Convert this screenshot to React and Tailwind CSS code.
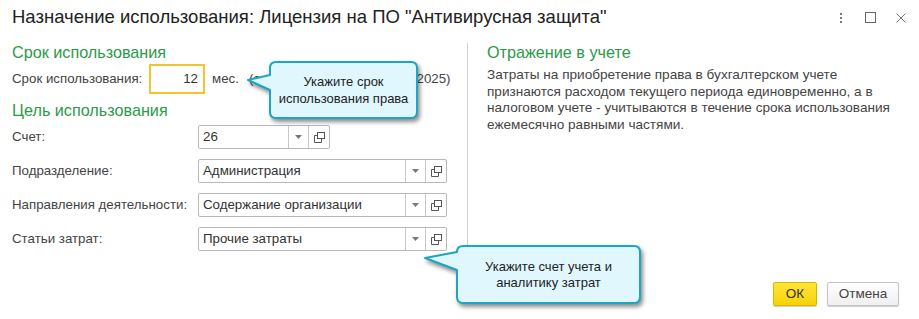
const OpenIcon = () => (
    <svg width="11" height="11" viewBox="0 0 11 11" fill="none" stroke="#555" strokeWidth="1">
        <rect x="3.5" y="0.5" width="7" height="6" />
        <path d="M3.5 3.5H0.5V10.5H7.5V6.5" />
    </svg>
);

const Arrow = () => (
    <svg width="7" height="4" viewBox="0 0 7 4">
        <path d="M0 0H7L3.5 4Z" fill="#777" />
    </svg>
);

const Combo = ({ value, width }) => (
    <div className={`flex h-[24px] border border-[#b8b8b8] rounded-[2px] bg-white ${width}`}>
        <div className="flex-1 flex items-center pl-[4px] text-[13.3px] text-[#333]">{value}</div>
        <div className="w-[20px] border-l border-[#c8c8c8] flex items-center justify-center">
            <Arrow />
        </div>
        <div className="w-[21px] border-l border-[#c8c8c8] flex items-center justify-center">
            <OpenIcon />
        </div>
    </div>
);

const Field = ({ label, value, width }) => (
    <div className="flex items-center h-[24px]">
        <div className="w-[186px] text-[13.3px] text-[#444]">{label}</div>
        <Combo value={value} width={width} />
    </div>
);

export default function App() {
    return (
        <div className="relative w-[919px] h-[319px] bg-white flex flex-col text-[#333] overflow-hidden" style={{ fontFamily: '"Liberation Sans", Arial, sans-serif' }}>
            {/* Header */}
            <div className="h-[35px] flex items-center pl-[12px] pr-[13px]">
                <div className="flex-1 text-[18.5px] text-[#222] leading-none">
                    Назначение использования: Лицензия на ПО "Антивирусная защита"
                </div>
                <div className="flex items-center">
                    <div className="flex flex-col gap-[2px] w-[2px] mr-[23px]">
                        <div className="w-[2px] h-[2px] bg-[#777]" />
                        <div className="w-[2px] h-[2px] bg-[#777]" />
                        <div className="w-[2px] h-[2px] bg-[#777]" />
                    </div>
                    <div className="w-[11px] h-[11px] border border-[#666] mr-[20px]" />
                    <svg width="10" height="10" viewBox="0 0 10 10" stroke="#777" strokeWidth="1">
                        <path d="M0.5 0.5L9.5 9.5M9.5 0.5L0.5 9.5" />
                    </svg>
                </div>
            </div>

            {/* Body */}
            <div className="flex-1 flex pt-[8px]">
                <div className="w-[455px] ml-[12px]">
                    <div className="text-[16.2px] leading-[19px] text-[#2c9a48]">Срок использования</div>
                    <div className="mt-[2px] flex items-center h-[30px] text-[13.3px]">
                        <div className="w-[137px] text-[#444]">Срок использования:</div>
                        <div className="w-[56px] h-[30px] border-2 border-[#f4c430] flex items-center justify-end pr-[5px] text-[#333]">12</div>
                        <div className="ml-[7px] text-[#444]">мес.</div>
                        <div className="ml-[10px] text-[#444] whitespace-nowrap">(с января 2025 по декабрь 2025)</div>
                    </div>
                    <div className="mt-[6px] text-[16.2px] leading-[20px] text-[#2c9a48]">Цель использования</div>
                    <div className="mt-[5px] flex flex-col gap-[10px]">
                        <Field label="Счет:" value="26" width="w-[132px]" />
                        <Field label="Подразделение:" value="Администрация" width="w-[249px]" />
                        <Field label="Направления деятельности:" value="Содержание организации" width="w-[249px]" />
                        <Field label="Статьи затрат:" value="Прочие затраты" width="w-[249px]" />
                    </div>
                </div>
                <div className="w-px h-[230px] bg-[#cfcfcf]" />
                <div className="pl-[19px]">
                    <div className="text-[16.2px] leading-[19px] text-[#2c9a48]">Отражение в учете</div>
                    <p className="mt-[5px] text-[13.6px] leading-[16.5px] text-[#444]">
                        Затраты на приобретение права в бухгалтерском учете<br />
                        признаются расходом текущего периода единовременно, а в<br />
                        налоговом учете - учитываются в течение срока использования<br />
                        ежемесячно равными частями.
                    </p>
                </div>
            </div>

            {/* Footer */}
            <div className="h-[37px] flex justify-end items-start pr-[20px] gap-[10px]">
                <button className="w-[44px] h-[24px] rounded-[2px] border border-[#d4b800] bg-gradient-to-b from-[#ffe433] to-[#f5d300] text-[13.5px] text-[#333] shadow-[0_1px_1px_rgba(0,0,0,0.2)]">
                    ОК
                </button>
                <button className="w-[72px] h-[24px] rounded-[2px] border border-[#c4c4c4] bg-gradient-to-b from-white to-[#efefef] text-[13.5px] text-[#444] shadow-[0_1px_1px_rgba(0,0,0,0.2)]">
                    Отмена
                </button>
            </div>

            {/* Callout 1 */}
            <div className="absolute left-[245px] top-[60px] w-[180px] h-[66px]">
                <svg width="180" height="66" viewBox="0 0 180 66" className="absolute inset-0 [filter:drop-shadow(2px_3px_2px_rgba(0,0,0,0.45))]">
                    <path d="M31 2H166Q172 2 172 8V52Q172 58 166 58H31Q25 58 25 52V30L3 20L25 15V8Q25 2 31 2Z" fill="#dff7fd" stroke="#1fa5c1" strokeWidth="2" strokeLinejoin="round" />
                </svg>
                <div className="absolute left-[25px] top-[2px] w-[147px] h-[56px] flex items-center justify-center text-center text-[13px] leading-[17px] text-[#222]">
                    Укажите срок<br />использования права
                </div>
            </div>

            {/* Callout 2 */}
            <div className="absolute left-[422px] top-[244px] w-[224px] h-[68px]">
                <svg width="224" height="68" viewBox="0 0 224 68" className="absolute inset-0 [filter:drop-shadow(2px_3px_2px_rgba(0,0,0,0.45))]">
                    <path d="M41 2H212Q218 2 218 8V53Q218 59 212 59H41Q35 59 35 53V26L3 14L35 8Q35 2 41 2Z" fill="#dff7fd" stroke="#1fa5c1" strokeWidth="2" strokeLinejoin="round" />
                </svg>
                <div className="absolute left-[35px] top-[2px] w-[183px] h-[57px] flex items-center justify-center text-center text-[13px] leading-[16px] text-[#222]">
                    Укажите счет учета и<br />аналитику затрат
                </div>
            </div>
        </div>
    );
}
